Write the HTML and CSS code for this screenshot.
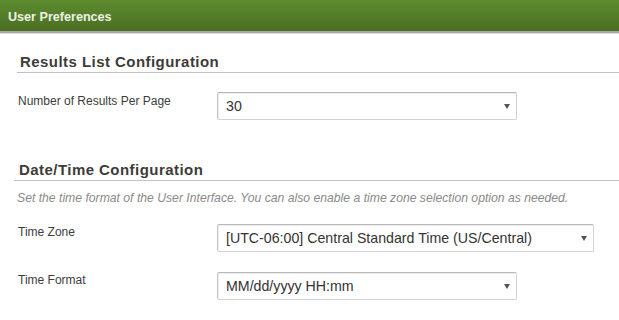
FILE: index.html
```html
<!DOCTYPE html>
<html>
<head>
<meta charset="utf-8">
<link rel="stylesheet" href="styles.css">
</head>
<body>
<div class="header">User Preferences</div>
<div class="content">
  <section class="section">
    <h2 class="section-title first">Results List Configuration</h2>
    <div class="row row-results">
      <label class="label">Number of Results Per Page</label>
      <div class="select-wrap w300">
        <select class="select"><option>30</option></select>
      </div>
    </div>
  </section>
  <section class="section">
    <h2 class="section-title second">Date/Time Configuration</h2>
    <p class="desc">Set the time format of the User Interface. You can also enable a time zone selection option as needed.</p>
    <div class="row row-tz">
      <label class="label">Time Zone</label>
      <div class="select-wrap w377">
        <select class="select"><option>[UTC-06:00] Central Standard Time (US/Central)</option></select>
      </div>
    </div>
    <div class="row row-tf">
      <label class="label">Time Format</label>
      <div class="select-wrap w300">
        <select class="select"><option>MM/dd/yyyy HH:mm</option></select>
      </div>
    </div>
  </section>
</div>
</body>
</html>
```

FILE: styles.css
```css
html, body {
  margin: 0;
  padding: 0;
  background: #fff;
  font-family: "Liberation Sans", Arial, sans-serif;
}

.header {
  height: 33px;
  box-sizing: border-box;
  padding: 9px 0 0 8px;
  background: linear-gradient(to bottom, #5e8c2f 0%, #4a6e22 100%);
  color: #eef2e6;
  font-weight: bold;
  font-size: 12.6px;
  line-height: 16px;
  border-bottom: 2px solid #a9a9a9;
  box-shadow: 0 1px 0 #d8d8d8;
}

.content {
  padding: 0;
}

.section-title {
  margin: 0;
  font-size: 15px;
  font-weight: bold;
  color: #3e3b39;
  letter-spacing: 0.45px;
  border-bottom: 1px solid #c2c2c2;
}

.section-title.first {
  margin: 20px 0 0 17px;
  padding: 0 0 1px 3px;
  line-height: 18px;
}

.section-title.second {
  margin: 0 0 0 14px;
  padding: 0 0 1px 5px;
  line-height: 18px;
}

.desc {
  margin: 10px 0 0 17px;
  font-size: 12.2px;
  font-style: italic;
  color: #8a8a8a;
  line-height: 14px;
}

.row {
  display: grid;
  grid-template-columns: 199px auto;
  align-items: start;
  padding-left: 18px;
}

.row-results {
  margin-top: 19px;
  margin-bottom: 41px;
}

.row-tz {
  margin-top: 19px;
}

.row-tf {
  margin-top: 20px;
}

.label {
  font-size: 12px;
  color: #3c3c3c;
  line-height: 14px;
  padding-top: 2px;
}

.row-tz .label,
.row-tf .label {
  padding-top: 1px;
}

.select-wrap {
  position: relative;
  height: 28px;
}

.w300 { width: 300px; }
.w377 { width: 377px; }

.select {
  appearance: none;
  -webkit-appearance: none;
  width: 100%;
  height: 100%;
  box-sizing: border-box;
  margin: 0;
  padding: 0 24px 0 8px;
  border: 1px solid #d2d2d2;
  border-top-color: #b8b8b8;
  border-left-color: #c4c4c4;
  border-radius: 2px;
  box-shadow: inset 1px 1px 1px rgba(0, 0, 0, 0.08);
  background: #fff;
  font-family: "Liberation Sans", Arial, sans-serif;
  font-size: 14.2px;
  color: #333;
}

.select-wrap::after {
  content: "";
  position: absolute;
  right: 7px;
  top: 12px;
  border-left: 3.5px solid transparent;
  border-right: 3.5px solid transparent;
  border-top: 5px solid #555;
  pointer-events: none;
}
```
